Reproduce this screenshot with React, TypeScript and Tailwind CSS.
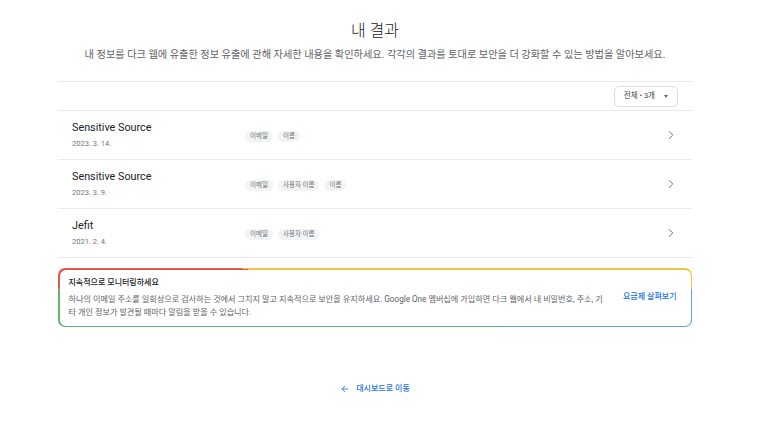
import React from 'react';
import { ChevronRight, ArrowLeft } from 'lucide-react';

const font = { fontFamily: 'Roboto, "Noto Sans CJK KR", sans-serif' };

interface Finding {
  name: string;
  date: string;
  tags: string[];
}

const findings: Finding[] = [
  { name: 'Sensitive Source', date: '2023. 3. 14.', tags: ['이메일', '이름'] },
  { name: 'Sensitive Source', date: '2023. 3. 9.', tags: ['이메일', '사용자 이름', '이름'] },
  { name: 'Jefit', date: '2021. 2. 4.', tags: ['이메일', '사용자 이름'] },
];

const FindingRow: React.FC<{ item: Finding }> = ({ item }) => (
  <div className="flex h-[49px] items-center border-b border-[#e8eaed] pl-[14px] pr-[14px]">
    <div className="w-[173px] pb-[1px]">
      <div className="text-[10.8px] leading-[15px] text-[#202124]">{item.name}</div>
      <div className="mt-[4px] text-[7.5px] leading-[10px] text-[#70757a]">{item.date}</div>
    </div>
    <div className="flex flex-1 items-center gap-[5px] pt-[3px]">
      {item.tags.map((t, i) => (
        <span
          key={i}
          className="rounded-full bg-[#f1f3f4] px-[5px] text-[6.5px] leading-[11px] text-[#70757a]"
        >
          {t}
        </span>
      ))}
    </div>
    <ChevronRight className="h-[14px] w-[14px] text-[#5f6368]" strokeWidth={1.5} />
  </div>
);

export default function App() {
  return (
    <div className="min-h-[425px] w-[773px] bg-white" style={font}>
      <div className="ml-[58px] w-[634px]">
        <div className="pt-[19px] text-center text-[16px] font-light leading-[24px] text-[#202124]">내 결과</div>
        <div className="mt-[4px] text-center text-[10.2px] leading-[16px] text-[#5f6368]">
          내 정보를 다크 웹에 유출한 정보 유출에 관해 자세한 내용을 확인하세요. 각각의 결과를 토대로 보안을 더 강화할 수 있는 방법을 알아보세요.
        </div>

        <div className="mt-[18px] flex h-[30px] items-center justify-end border-y border-[#e8eaed] pr-[14px]">
          <button className="flex h-[21px] items-center gap-[9px] rounded-[5px] border border-[#dadce0] px-[9px] text-[7.5px] text-[#3c4043]">
            <span>전체 • 3개</span>
            <span className="h-0 w-0 border-x-[2.5px] border-t-[3px] border-x-transparent border-t-[#5f6368]" />
          </button>
        </div>

        {findings.map((f, i) => (
          <FindingRow key={i} item={f} />
        ))}

        <div
          className="mt-[10px] rounded-[7px] p-[1.5px]"
          style={{
            background:
              'conic-gradient(from 0deg at 50% 35%, #f6c244 0deg 90deg, #6b9cf6 90deg 107deg, #5bb974 107deg 270deg, #e0574f 270deg 278.6deg, #f6c244 278.6deg 360deg)',
          }}
        >
          <div className="flex items-center rounded-[6px] bg-white pb-[7px] pl-[9px] pr-[14px] pt-[6px]">
            <div className="flex-1">
              <div className="text-[8px] font-medium leading-[14px] text-[#202124]">지속적으로 모니터링하세요</div>
              <div className="mt-[3px] text-[8.15px] leading-[13px] text-[#5f6368]">
                하나의 이메일 주소를 일회성으로 검사하는 것에서 그치지 말고 지속적으로 보안을 유지하세요. Google One 멤버십에 가입하면 다크 웹에서 내 비밀번호, 주소, 기타 개인 정보가 발견될 때마다 알림을 받을 수 있습니다.
              </div>
            </div>
            <a className="ml-[16px] whitespace-nowrap text-[8px] font-medium text-[#1a73e8]">요금제 살펴보기</a>
          </div>
        </div>

        <div className="mt-[56px] flex items-center justify-center gap-[6px] text-[8px] font-medium text-[#1a73e8]">
          <ArrowLeft className="h-[10px] w-[10px]" strokeWidth={2} />
          <span>대시보드로 이동</span>
        </div>
      </div>
    </div>
  );
}
